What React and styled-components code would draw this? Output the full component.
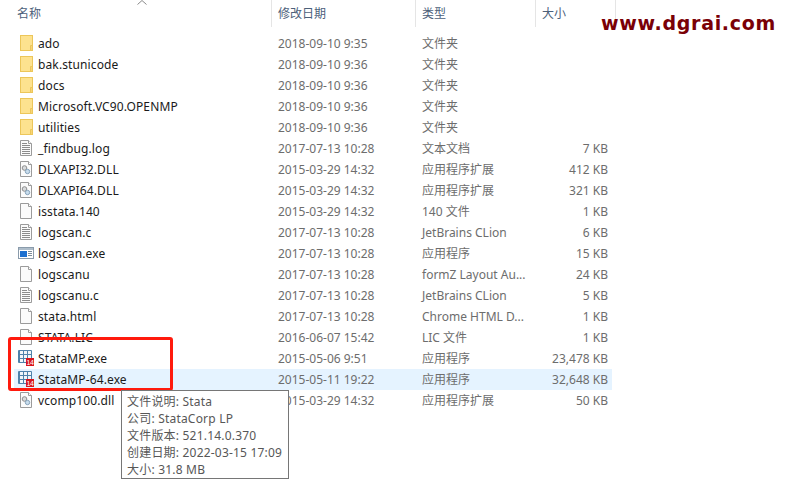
import styled, { createGlobalStyle } from "styled-components";

const GlobalStyle = createGlobalStyle`
  html, body {
    margin: 0;
    padding: 0;
    background: #fff;
  }
`;

const Page = styled.div`
  position: relative;
  width: 801px;
  height: 493px;
  overflow: hidden;
  background: #fff;
  font-family: "Noto Sans", "Noto Sans CJK SC", sans-serif;
  font-size: 12px;
`;

const Header = styled.div`
  display: grid;
  grid-template-columns: 272px 144px 120px 80px;
  height: 27px;
`;

const HeaderCell = styled.div`
  padding-left: ${(p) => p.$indent}px;
  padding-top: 5px;
  line-height: 17px;
  color: #4c607a;
  border-right: 1px solid #e5e5e5;
`;

const SortCaret = styled.svg`
  position: absolute;
  left: 137px;
  top: 0;
`;

const List = styled.div`
  margin: 6px 0 0 14px;
  width: 598px;
`;

const Row = styled.div`
  display: grid;
  grid-template-columns: 24px 240px 144px 1fr 70px;
  align-items: center;
  height: 21px;
  line-height: 21px;
  color: #6d6d6d;
  background: ${(p) => (p.$selected ? "#e5f3ff" : "transparent")};
`;

const IconCell = styled.div`
  display: flex;
  justify-content: center;
  height: 21px;
  padding-top: 2px;
  box-sizing: border-box;
  svg {
    display: block;
  }
`;

const Name = styled.div`
  color: #1a1a1a;
  white-space: nowrap;
  letter-spacing: 0.12px;
`;

const Size = styled.div`
  text-align: right;
  padding-right: 4px;
`;

const Watermark = styled.div`
  position: absolute;
  left: 601px;
  top: 9px;
  font-family: "DejaVu Sans", sans-serif;
  font-weight: 700;
  font-size: 19px;
  line-height: 28px;
  letter-spacing: 0.7px;
  color: #7a0006;
  white-space: nowrap;
`;

const Highlight = styled.div`
  position: absolute;
  left: 8px;
  top: 337px;
  width: 159px;
  height: 48px;
  border: 3px solid #ff1a0d;
  border-radius: 3px;
`;

const Tooltip = styled.div`
  position: absolute;
  left: 121px;
  top: 390px;
  width: 157px;
  height: 79px;
  padding: 2px 4px 6px 5px;
  background: #fff;
  border: 1px solid #767676;
  color: #575757;
  line-height: 17px;
  letter-spacing: 0.2px;
  white-space: nowrap;
`;

const Icon = styled.svg.attrs({ width: 16, height: 16, viewBox: "0 0 16 16" })``;

const BadgeText = styled.text`
  font-family: "Liberation Sans", sans-serif;
  font-size: 7px;
  font-weight: 400;
  letter-spacing: -0.2px;
  fill: #fff;
`;

const FolderIcon = () => (
  <Icon>
    <rect x="2.500" y=".5" width="12" height="15" fill="#fde28f" stroke="#ecc65a" />
    <path d="M12.500 15.500v-5h2v5z" fill="#f8d476" stroke="#ecc65a" />
  </Icon>
);

const PageOutline = () => (
  <>
    <path d="M2.500.5h8l3 3v12h-11z" fill="#fbfbfb" stroke="#9b9b9b" />
    <path d="M10.500.5v3h3" fill="#fff" stroke="#9b9b9b" />
  </>
);

const BlankIcon = () => (
  <Icon>
    <PageOutline />
  </Icon>
);

const TextIcon = () => (
  <Icon>
    <PageOutline />
    <path d="M4 3.500h5M4 5.500h8M4 7.500h8M4 9.500h8M4 11.500h8M4 13.500h8" stroke="#8c8c8c" />
  </Icon>
);

const DllIcon = () => (
  <Icon>
    <PageOutline />
    <circle cx="6.500" cy="7" r="2.300" fill="#d9dcde" stroke="#8f8f8f" />
    <circle cx="9.500" cy="10.500" r="2.200" fill="#c8dcec" stroke="#86a3bb" />
  </Icon>
);

const ExeIcon = () => (
  <Icon>
    <rect x=".5" y="2.500" width="15" height="11" fill="#fff" stroke="#8a9bab" />
    <rect x="1" y="3" width="14" height="2" fill="#aebdca" />
    <rect x="2" y="6" width="7" height="6" fill="#1c70d0" />
    <path d="M10 6.500h4M10 8.500h4M10 10.500h4" stroke="#7d8c99" />
  </Icon>
);

const StataIcon = () => (
  <Icon>
    <rect width="14" height="13" rx="1" fill="#4f82aa" />
    <path
      d="M2 1h3v3H2zM6 1h3v3H6zM10 1h3v3h-3zM2 5h3v3H2zM6 5h3v3H6zM10 5h3v3h-3zM2 9h3v3H2zM6 9h3v3H6z"
      fill="#f2f6f9"
    />
    <rect x="8" y="8" width="8" height="8" fill="#d8141c" />
    <BadgeText x="8.400" y="14.800">14</BadgeText>
  </Icon>
);

const icons = {
  folder: <FolderIcon />,
  blank: <BlankIcon />,
  text: <TextIcon />,
  dll: <DllIcon />,
  exe: <ExeIcon />,
  stata: <StataIcon />,
};

const files = [
  ["folder", "ado", "2018-09-10 9:35", "文件夹", ""],
  ["folder", "bak.stunicode", "2018-09-10 9:36", "文件夹", ""],
  ["folder", "docs", "2018-09-10 9:36", "文件夹", ""],
  ["folder", "Microsoft.VC90.OPENMP", "2018-09-10 9:36", "文件夹", ""],
  ["folder", "utilities", "2018-09-10 9:36", "文件夹", ""],
  ["text", "_findbug.log", "2017-07-13 10:28", "文本文档", "7 KB"],
  ["dll", "DLXAPI32.DLL", "2015-03-29 14:32", "应用程序扩展", "412 KB"],
  ["dll", "DLXAPI64.DLL", "2015-03-29 14:32", "应用程序扩展", "321 KB"],
  ["blank", "isstata.140", "2015-03-29 14:32", "140 文件", "1 KB"],
  ["text", "logscan.c", "2017-07-13 10:28", "JetBrains CLion", "6 KB"],
  ["exe", "logscan.exe", "2017-07-13 10:28", "应用程序", "15 KB"],
  ["blank", "logscanu", "2017-07-13 10:28", "formZ Layout Au...", "24 KB"],
  ["text", "logscanu.c", "2017-07-13 10:28", "JetBrains CLion", "5 KB"],
  ["blank", "stata.html", "2017-07-13 10:28", "Chrome HTML D...", "1 KB"],
  ["blank", "STATA.LIC", "2016-06-07 15:42", "LIC 文件", "1 KB"],
  ["stata", "StataMP.exe", "2015-05-06 9:51", "应用程序", "23,478 KB"],
  ["stata", "StataMP-64.exe", "2015-05-11 19:22", "应用程序", "32,648 KB", true],
  ["dll", "vcomp100.dll", "2015-03-29 14:32", "应用程序扩展", "50 KB"],
];

export default function App() {
  return (
    <Page>
      <GlobalStyle />
      <Header>
        <HeaderCell $indent={17}>名称</HeaderCell>
        <HeaderCell $indent={6}>修改日期</HeaderCell>
        <HeaderCell $indent={6}>类型</HeaderCell>
        <HeaderCell $indent={6}>大小</HeaderCell>
      </Header>
      <SortCaret width="10" height="5" viewBox="0 0 10 5">
        <path d="M.5 4.500L5 .5l4.500 4" fill="none" stroke="#8a8a8a" />
      </SortCaret>
      <List>
        {files.map(([icon, name, date, type, size, selected]) => (
          <Row key={name} $selected={selected}>
            <IconCell>{icons[icon]}</IconCell>
            <Name>{name}</Name>
            <div>{date}</div>
            <div>{type}</div>
            <Size>{size}</Size>
          </Row>
        ))}
      </List>
      <Watermark>www.dgrai.com</Watermark>
      <Highlight />
      <Tooltip>
        <div>文件说明: Stata</div>
        <div>公司: StataCorp LP</div>
        <div>文件版本: 521.14.0.370</div>
        <div>创建日期: 2022-03-15 17:09</div>
        <div>大小: 31.8 MB</div>
      </Tooltip>
    </Page>
  );
}
